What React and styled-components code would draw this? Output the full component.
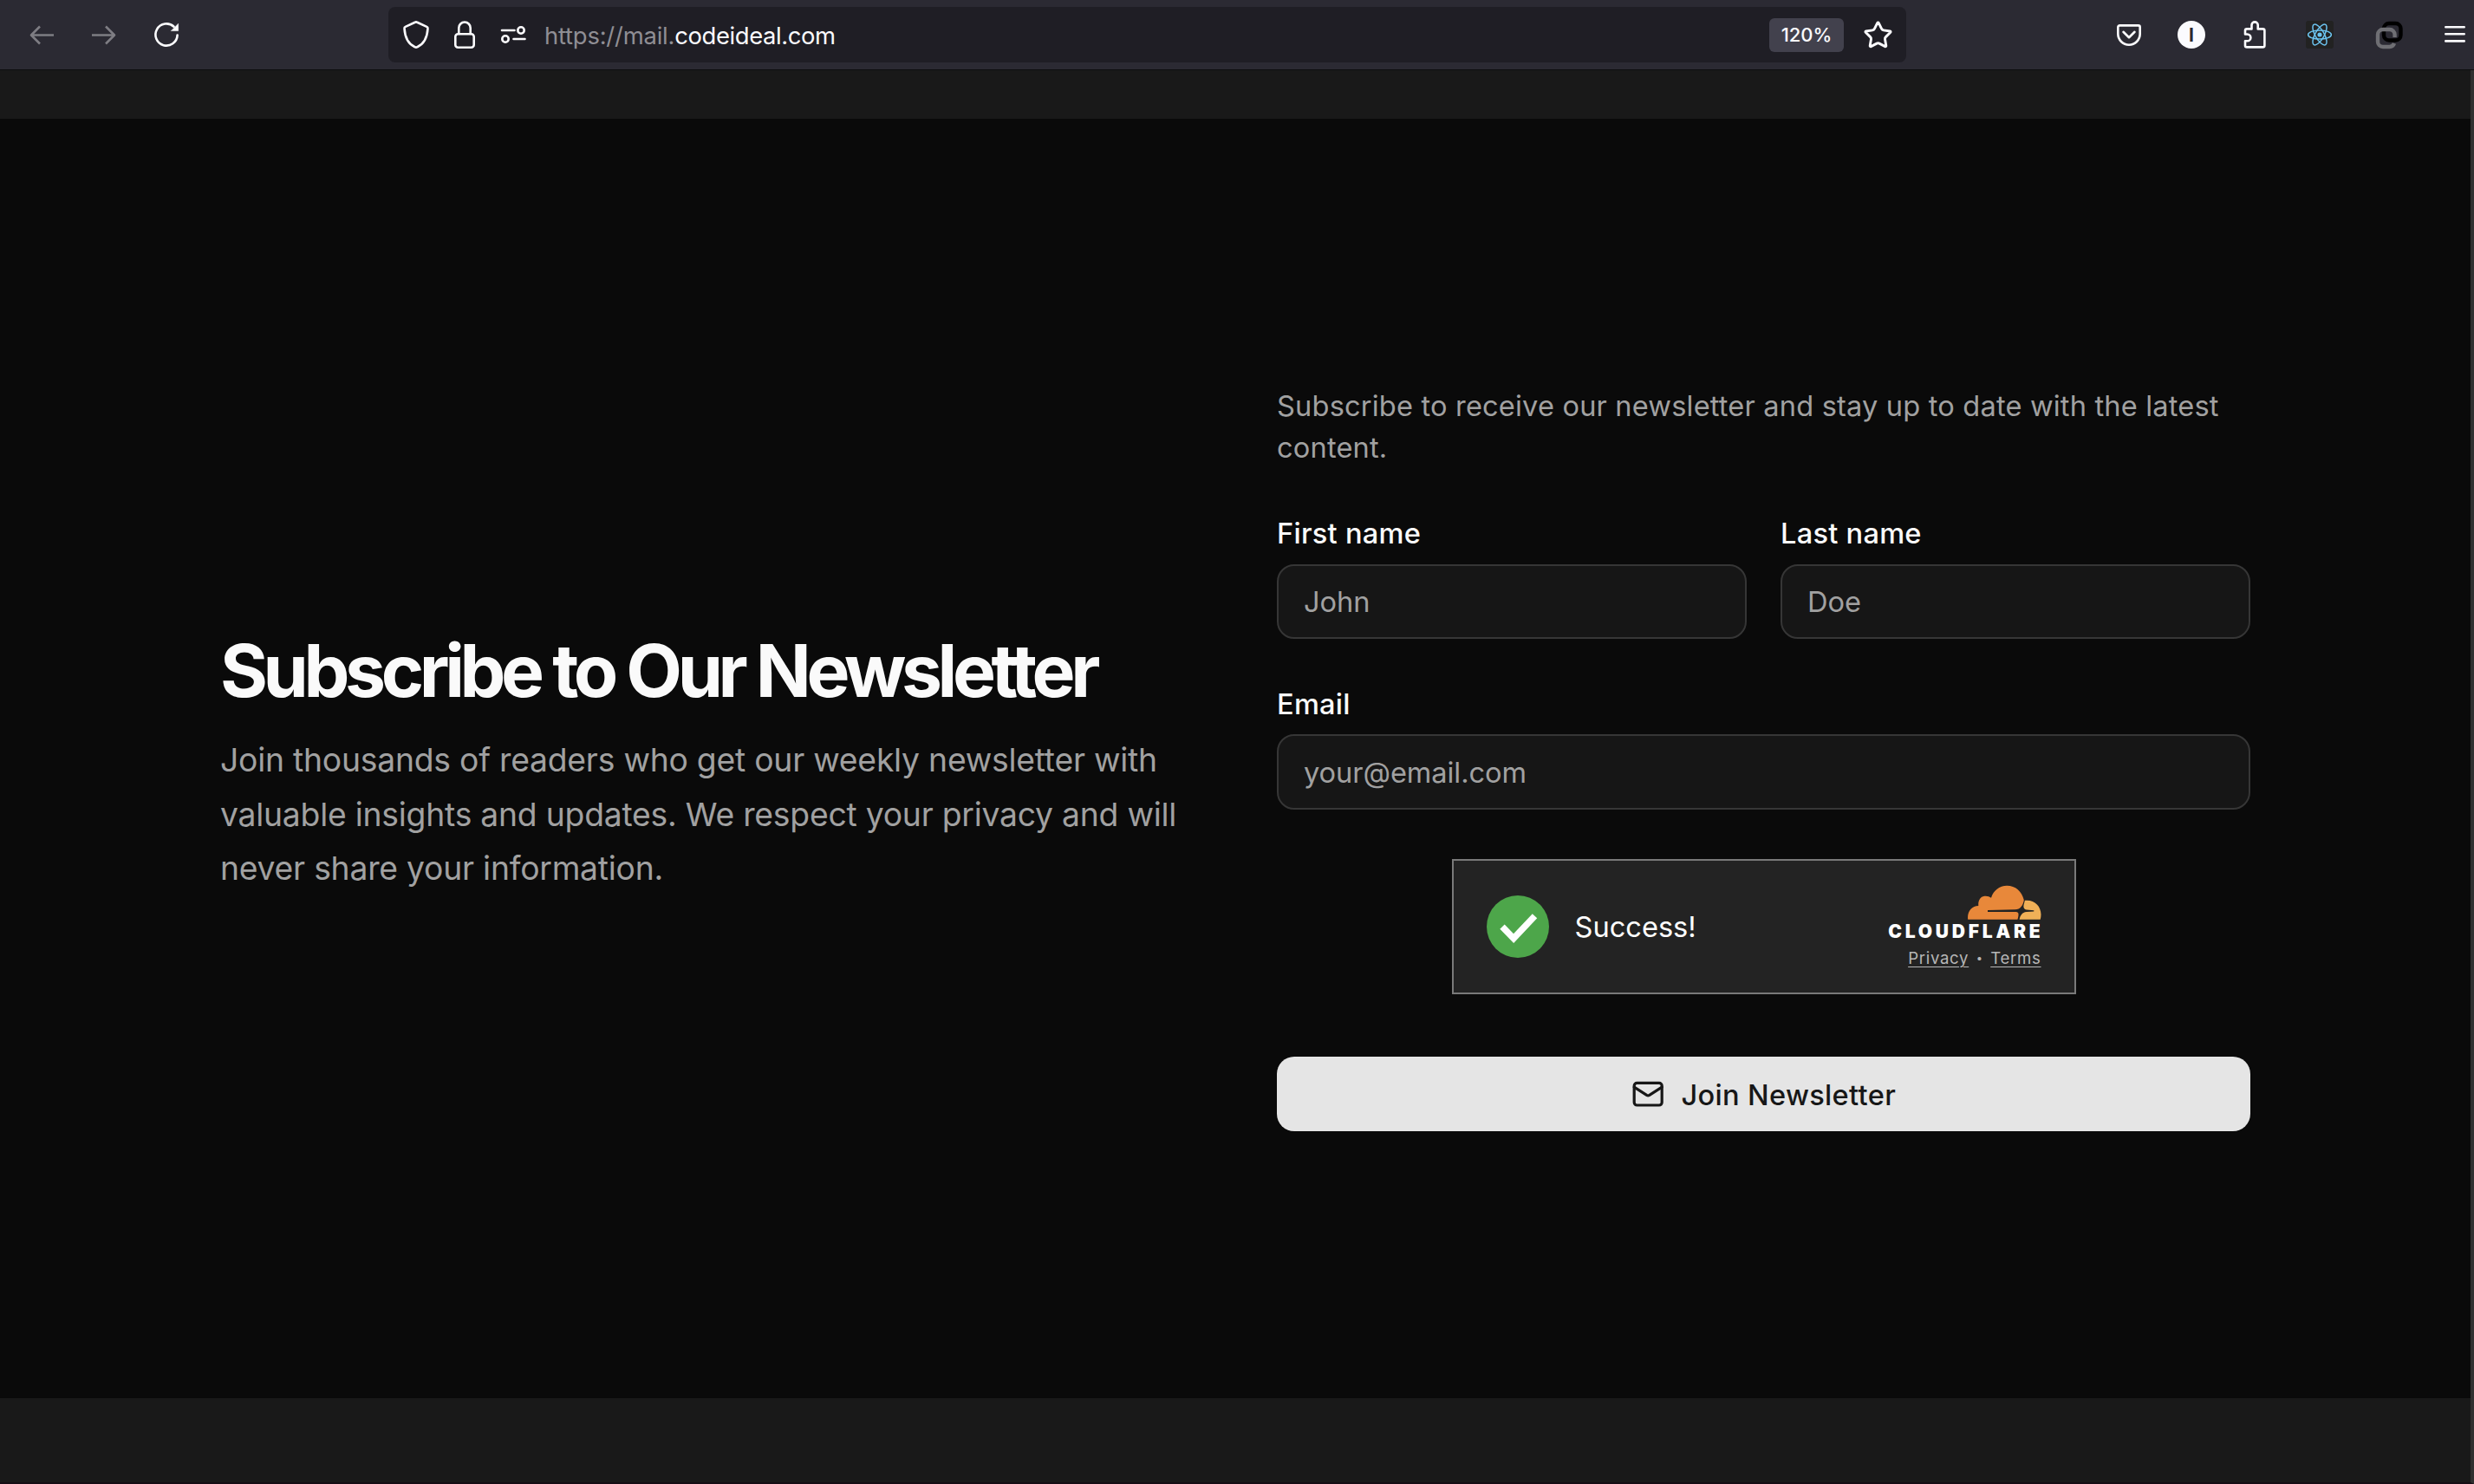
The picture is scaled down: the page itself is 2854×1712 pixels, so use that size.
import styled, { createGlobalStyle } from "styled-components";
import { Mail, Star } from "lucide-react";

const GlobalStyle = createGlobalStyle`
  * {
    box-sizing: border-box;
  }
  body {
    margin: 0;
    background: #191919;
    font-family: Inter, "Liberation Sans", sans-serif;
    -webkit-font-smoothing: antialiased;
  }
`;

const Window = styled.div`
  width: 100%;
  height: 1712px;
  display: flex;
  flex-direction: column;
  overflow: hidden;
`;

/* Browser toolbar */
const Toolbar = styled.header`
  display: flex;
  align-items: center;
  height: 81px;
  padding: 0 6px 0 32px;
  background: #2b2a33;
  border-bottom: 1px solid #0d0d0f;
`;

const NavButtons = styled.nav`
  display: flex;
  gap: 40px;
  width: 416px;
`;

const Icon = styled.svg`
  display: block;
  flex: none;
  width: 32px;
  height: 32px;
  margin-left: ${(props) => props.$shift || 0}px;
  overflow: visible;
  fill: none;
  stroke: ${(props) => props.$color || "#fbfbfe"};
  stroke-width: ${(props) => props.$stroke || 2.6};
  stroke-linecap: ${(props) => props.$cap || "round"};
  stroke-linejoin: round;
`;

const AddressBar = styled.div`
  display: flex;
  align-items: center;
  gap: 24px;
  width: 1751px;
  height: 64px;
  padding: 0 15px 0 16px;
  border-radius: 8px;
  background: #1f1e25;
`;

const Url = styled.span`
  flex: 1;
  margin-left: -4px;
  padding-top: 2px;
  font-size: 27.4px;
  letter-spacing: -0.2px;
  color: #8f8e94;

  b {
    font-weight: 400;
    letter-spacing: -0.38px;
    color: #fbfbfe;
  }
`;

const ZoomBadge = styled.span`
  display: flex;
  align-items: center;
  justify-content: center;
  width: 86px;
  height: 39px;
  border-radius: 6px;
  background: #42414d;
  color: #fbfbfe;
  font-size: 22px;
  font-weight: 500;
`;

const BookmarkStar = styled(Star)`
  margin-left: -2px;
  color: #fbfbfe;
`;

const Extensions = styled.div`
  display: flex;
  gap: 40px;
  margin-left: auto;
`;

const RoundBadge = styled.span`
  display: flex;
  align-items: center;
  justify-content: center;
  width: 32px;
  height: 32px;
  border-radius: 50%;
  background: #fbfbfe;
  color: #2b2a33;
  font-size: 21px;
  font-weight: 700;
`;

/* Page */
const Viewport = styled.div`
  flex: 1;
  padding: 56px 0 97px;
  border-right: 4px solid #303030;
  border-bottom: 2px solid #150d14;
  background: #191919;
`;

const Main = styled.main`
  display: grid;
  grid-template-columns: 1fr 1fr;
  gap: 96px;
  align-items: center;
  height: 1476px;
  padding: 0 254px;
  background: #0a0a0a;
`;

const Intro = styled.section`
  padding-top: 10px;
`;

const Title = styled.h1`
  margin: 0 0 24px;
  font-size: 84px;
  font-weight: 700;
  line-height: 96px;
  letter-spacing: -5.4px;
  white-space: nowrap;
  color: #fafafa;
`;

const Lead = styled.p`
  margin: 0;
  font-size: 37.3px;
  line-height: 62.4px;
  letter-spacing: -0.235px;
  white-space: nowrap;
  color: #a1a1a1;
`;

const Form = styled.form`
  display: flex;
  flex-direction: column;
  gap: 57.2px;
  padding-bottom: 0.6px;
`;

const FormText = styled.p`
  margin: 0 0 1px;
  font-size: 32.6px;
  line-height: 48px;
  letter-spacing: 0.175px;
  white-space: nowrap;
  color: #a1a1a1;
`;

const FieldRow = styled.div`
  display: grid;
  grid-template-columns: 1fr 1fr;
  gap: 39px;
`;

const Field = styled.label`
  display: flex;
  flex-direction: column;
  gap: 18.2px;
  padding-top: 1px;
  font-size: 32.6px;
  font-weight: 500;
  line-height: 33.6px;
  letter-spacing: 0.26px;
  color: #fafafa;
`;

const Input = styled.input`
  width: 100%;
  height: 86.4px;
  padding: 0 29px;
  border: 2px solid #363636;
  border-radius: 20px;
  outline: none;
  background: #161616;
  color: #fafafa;
  font-family: inherit;
  font-size: 32.6px;
  letter-spacing: -0.06px;

  &::placeholder {
    color: #a1a1a1;
    opacity: 1;
  }
`;

const Turnstile = styled.div`
  align-self: center;
  display: flex;
  align-items: center;
  width: 720px;
  height: 156px;
  padding: 0 38px;
  border: 2px solid #797979;
  background: #232323;
`;

const Check = styled.svg`
  width: 72px;
  height: 72px;
`;

const Status = styled.span`
  flex: 1;
  margin-left: 30px;
  font-size: 32.6px;
  color: #fff;
`;

const Brand = styled.div`
  display: flex;
  flex-direction: column;
  align-items: flex-end;
`;

const Cloud = styled.svg`
  width: 85px;
  height: 41px;
`;

const BrandName = styled.span`
  margin: 2px -3px 0 0;
  font-size: 21px;
  font-weight: 900;
  line-height: 22px;
  letter-spacing: 3.8px;
  color: #fff;
`;

const Legal = styled.div`
  display: flex;
  align-items: center;
  gap: 8px;
  margin-top: 7px;
  font-size: 18.6px;
  line-height: 24px;
  letter-spacing: 0.7px;
  color: #b6b6b6;

  a {
    text-decoration: underline;
    text-decoration-thickness: 1px;
    text-underline-offset: 3px;
  }
`;

const Dot = styled.span`
  width: 9px;
  font-size: 13px;
  text-align: center;
`;

const SubmitButton = styled.button`
  display: flex;
  align-items: center;
  justify-content: center;
  gap: 19.2px;
  height: 86.4px;
  margin-top: 14.8px;
  border: 0;
  border-radius: 20px;
  background: #e5e5e5;
  color: #171717;
  font-family: inherit;
  font-size: 32.6px;
  font-weight: 500;
  letter-spacing: 0.32px;
`;

const ButtonText = styled.span`
  padding-top: 1px;
`;

const ReactLogo = () => (
  <Icon viewBox="0 0 32 32" $shift={3} $color="#6cc4f0" $stroke={1.5}>
    <rect width="32" height="32" rx="3" fill="#222" stroke="none" />
    <circle cx="16" cy="16" r="2.6" fill="#6cc4f0" stroke="none" />
    {[0, 60, 120].map((angle) => (
      <ellipse key={angle} cx="16" cy="16" rx="13.4" ry="5.1" transform={`rotate(${angle} 16 16)`} />
    ))}
  </Icon>
);

const BrowserToolbar = () => (
  <Toolbar>
    <NavButtons>
      <Icon viewBox="0 0 32 32" $color="#7e7d83" $cap="butt">
        <path d="M30 16.5H4M14 6.500l-10 10 10 10" />
      </Icon>
      <Icon viewBox="0 0 32 32" $color="#7e7d83" $cap="butt">
        <path d="M2 16.500h26M18 6.500l10 10-10 10" />
      </Icon>
      <Icon viewBox="0 0 32 32">
        <path d="M28.600 16.600A12.600 12.600 0 1 1 24.600 6.800" />
        <path d="M29.600 3.600v8h-8z" fill="#fbfbfe" strokeWidth="0.600" />
      </Icon>
    </NavButtons>
    <AddressBar>
      <Icon viewBox="0 0 32 32">
        <path d="M14.700 1.800a2.600 2.600 0 0 1 2.600 0l11 5.100c.9.400 1.300 1.100 1.200 2C28.900 18.500 25.500 26.500 17.400 30.200a3 3 0 0 1-2.800 0C6.500 26.500 3.100 18.500 2.500 8.900c-.1-.9.300-1.600 1.200-2z" />
      </Icon>
      <Icon viewBox="0 0 32 32">
        <rect x="5.300" y="15.300" width="21.400" height="15.400" rx="3" />
        <path d="M9.300 15V8.200a6.700 6.700 0 0 1 13.400 0V15" />
      </Icon>
      <Icon viewBox="0 0 32 32">
        <path d="M3 11h14.500M16.500 21h13" />
        <circle cx="25" cy="11" r="3.700" />
        <circle cx="7" cy="21" r="3.700" />
      </Icon>
      <Url>
        https://mail.<b>codeideal.com</b>
      </Url>
      <ZoomBadge>120%</ZoomBadge>
      <BookmarkStar size={35} strokeWidth={2} />
    </AddressBar>
    <Extensions>
      <Icon viewBox="0 0 32 32">
        <path d="M5.300 5.400h21.400a2 2 0 0 1 2 2v7.600a12.700 12.700 0 0 1-25.400 0V7.400a2 2 0 0 1 2-2z" />
        <path d="M9.500 12.800l6.500 6.400 6.500-6.400" />
      </Icon>
      <RoundBadge>I</RoundBadge>
      <Icon viewBox="0 0 32 32" $shift={1}>
        <path d="M5 15.500V11.400a2 2 0 0 1 2-2h5.500V5a3.600 3.600 0 0 1 7.200 0v4.400h5.700a2 2 0 0 1 2 2v17a2 2 0 0 1-2 2H7a2 2 0 0 1-2-2v-5.100h2.500a3.900 3.900 0 0 0 0-7.800z" />
      </Icon>
      <ReactLogo />
      <Icon viewBox="0 0 32 32" $shift={8} $color="#6f6f74" $stroke={4.4} $cap="butt">
        <rect x="10" y="3" width="19.500" height="19.500" rx="6" stroke="#000" />
        <path d="M22.600 19v-3a6 6 0 0 0-6-6H9a6 6 0 0 0-6 6v8a6 6 0 0 0 6 6h7.600a6 6 0 0 0 5.400-4" />
      </Icon>
      <Icon viewBox="0 0 32 32" $shift={4}>
        <path d="M5.300 7.200h21.400M5.300 15.200h21.400M5.300 23.400h21.400" />
      </Icon>
    </Extensions>
  </Toolbar>
);

const TurnstileWidget = () => (
  <Turnstile>
    <Check viewBox="0 0 72 72">
      <circle cx="36" cy="36" r="36" fill="#4da64a" />
      <path d="M18 36.200L31.100 49.600 55.500 23.700" fill="none" stroke="#fff" strokeWidth="7.500" />
    </Check>
    <Status>Success!</Status>
    <Brand>
      <Cloud viewBox="0 0 85 41">
        <path
          fill="#e8883a"
          d="M.2 39.700C-1 31 4.500 24 12.300 24 11.800 17.500 15 12.700 20.800 12.700c2.400 0 4.400.800 6.200 2C29.500 6.500 36.500.700 45.200.700 55 .700 62.500 7.200 64.800 17.300 64 23.500 60.500 28.300 54.800 28.300L23 28.900V31h32.600c2 0 3 1.200 2.900 3 0 2.200-.5 4-1.100 5.700z"
        />
        <path
          fill="#f0b057"
          d="M65.900 17.800C76.500 16.500 84.500 24 84.500 34c0 2-.3 4-.8 5.700H59.600C60.500 35.500 62.500 31.300 67.800 31l8.500-.500v-1.200l-8.500-.700C64.500 28 63.900 25 64.800 22z"
        />
      </Cloud>
      <BrandName>CLOUDFLARE</BrandName>
      <Legal>
        <a>Privacy</a>
        <Dot>•</Dot>
        <a>Terms</a>
      </Legal>
    </Brand>
  </Turnstile>
);

export default function App() {
  return (
    <Window>
      <GlobalStyle />
      <BrowserToolbar />
      <Viewport>
        <Main>
          <Intro>
            <Title>Subscribe to Our Newsletter</Title>
            <Lead>
              Join thousands of readers who get our weekly newsletter with
              <br />
              valuable insights and updates. We respect your privacy and will
              <br />
              never share your information.
            </Lead>
          </Intro>
          <Form>
            <FormText>
              Subscribe to receive our newsletter and stay up to date with the latest
              <br />
              content.
            </FormText>
            <FieldRow>
              <Field>
                First name
                <Input placeholder="John" />
              </Field>
              <Field>
                Last name
                <Input placeholder="Doe" />
              </Field>
            </FieldRow>
            <Field>
              Email
              <Input type="email" placeholder="your@email.com" />
            </Field>
            <TurnstileWidget />
            <SubmitButton type="button">
              <Mail size={38.4} strokeWidth={2} />
              <ButtonText>Join Newsletter</ButtonText>
            </SubmitButton>
          </Form>
        </Main>
      </Viewport>
    </Window>
  );
}
